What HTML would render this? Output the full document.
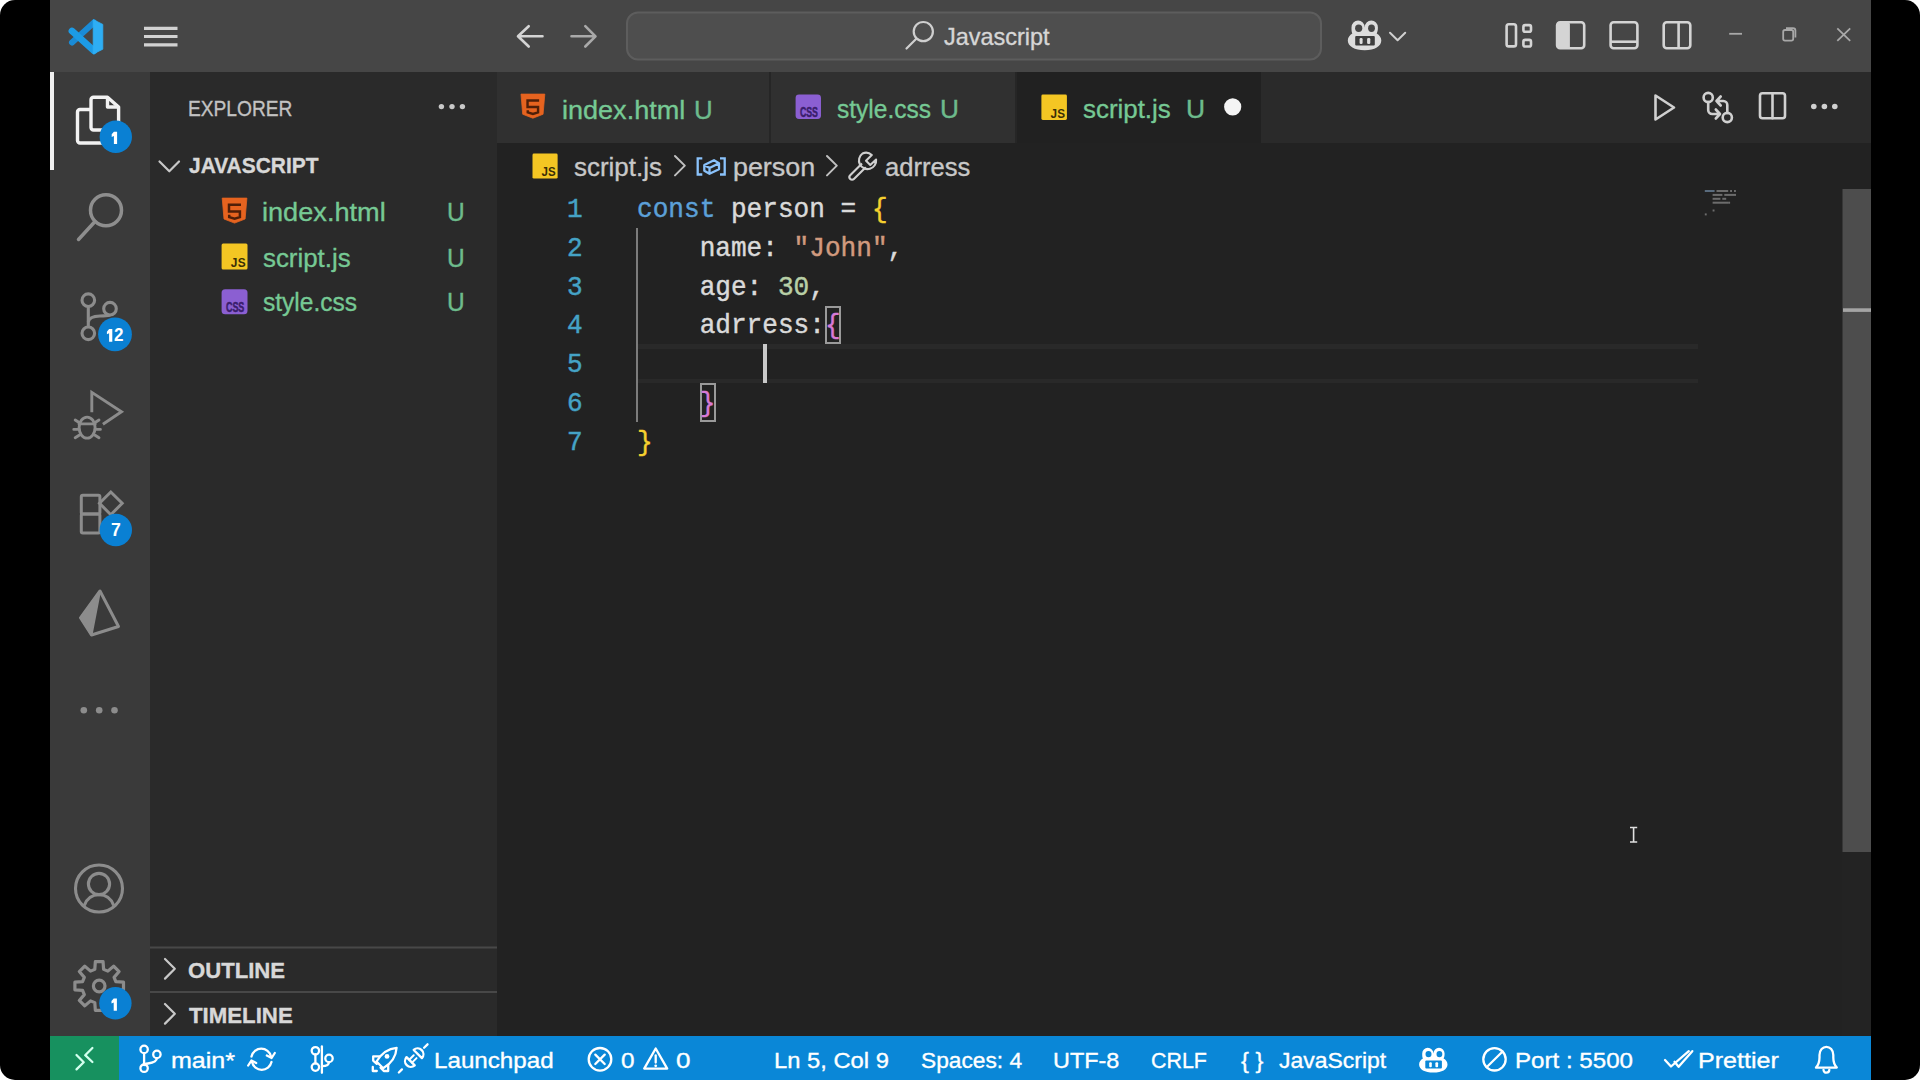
<!DOCTYPE html>
<html><head><meta charset="utf-8">
<style>
html,body{margin:0;padding:0;width:1920px;height:1080px;overflow:hidden;background:#fff;}
#frame{position:absolute;left:0;top:0;width:1920px;height:1080px;background:#000;border-radius:15px;overflow:hidden;}
.a{position:absolute;}
.t{position:absolute;white-space:nowrap;line-height:1;font-family:"Liberation Sans",sans-serif;transform-origin:0 0;-webkit-text-stroke:0.35px currentColor;}
.m{position:absolute;white-space:pre;line-height:1;font-family:"Liberation Mono",monospace;transform-origin:0 0;}
.m span,.m{-webkit-text-stroke:0.45px currentColor;}
svg{position:absolute;overflow:visible;}
</style></head><body>
<div id="frame">
  <!-- title bar -->
  <div class="a" style="left:50px;top:0;width:1821px;height:72px;background:#464646;"></div>
  <!-- activity bar -->
  <div class="a" style="left:50px;top:72px;width:100px;height:964px;background:#3a3a3a;"></div>
  <!-- sidebar -->
  <div class="a" style="left:150px;top:72px;width:347px;height:964px;background:#2a2a2a;"></div>
  <!-- editor -->
  <div class="a" style="left:497px;top:72px;width:1374px;height:964px;background:#222222;"></div>
  <!-- tab bar -->
  <div class="a" style="left:497px;top:72px;width:1374px;height:71px;background:#2a2a2a;"></div>
  <!-- status bar -->
  <div class="a" style="left:50px;top:1036px;width:1821px;height:44px;background:#0a87d7;"></div>
  <div class="a" style="left:50px;top:1036px;width:69px;height:44px;background:#17915f;"></div>

  <svg width="1920" height="1080" viewBox="0 0 1920 1080" style="left:0;top:0;">
    <!-- VS Code logo -->
    <g>
      <path d="M72,42.5 L94,22.5" stroke="#1a8bd6" stroke-width="6" stroke-linecap="round"/>
      <path d="M72,31 L94,50.8" stroke="#1c9be6" stroke-width="6.8" stroke-linecap="round"/>
      <path d="M93.2,19.6 L102.8,24.4 L102.8,49.2 L93.2,54 Z" fill="#2eaef4" stroke="#2eaef4" stroke-width="0.8" stroke-linejoin="round"/>
    </g>
    <!-- hamburger -->
    <g stroke="#d2d2d2" stroke-width="3.2" stroke-linecap="butt">
      <path d="M144,28.3 H177.5 M144,36.5 H177.5 M144,44.8 H177.5"/>
    </g>
    <!-- back / forward -->
    <g fill="none" stroke-width="2.6" stroke-linecap="round" stroke-linejoin="round">
      <path d="M528.7,26.2 L518,36.3 L528.7,46.5 M518.5,36.3 H542.5" stroke="#d4d4d4"/>
      <path d="M585.3,26.2 L595.5,36.3 L585.3,46.5 M595,36.3 H571.5" stroke="#a9a9a9"/>
    </g>
    <!-- search box -->
    <rect x="627" y="12.5" width="694" height="47" rx="11" fill="#4e4e4e" stroke="#5d5d5d" stroke-width="2"/>
    <g fill="none" stroke="#cfcfcf" stroke-width="2.2" stroke-linecap="round">
      <circle cx="923.3" cy="31.6" r="9.6"/>
      <path d="M916.3,38.7 L906.5,48.5"/>
    </g>
    <!-- copilot -->
    <g>
      <path d="M1351.5,27.5 a6.6,6.9 0 1 1 13.2,0 a6.6,6.9 0 1 1 13.2,0 c0,3 -0.5,4.5 -1.2,6 c2.6,1.4 4.6,4 4.6,7 c0,5.7 -6.5,9.8 -16.6,9.8 c-10.1,0 -16.9,-4.1 -16.9,-9.8 c0,-3 2,-5.6 4.5,-7 c-0.7,-1.5 -0.8,-3 -0.8,-6 Z" fill="#dcdcdc"/>
      <ellipse cx="1358.7" cy="28.2" rx="3.6" ry="3.7" fill="#464646"/>
      <ellipse cx="1371.5" cy="28.2" rx="3.4" ry="3.7" fill="#464646"/>
      <rect x="1355.2" y="36.1" width="19.6" height="9.4" rx="1" fill="#3d3d3d"/>
      <rect x="1359.6" y="38" width="3" height="6" rx="1.2" fill="#dcdcdc"/>
      <rect x="1367.1" y="38" width="3.2" height="6" rx="1.2" fill="#dcdcdc"/>
      <path d="M1390,32.8 L1397.6,40.2 L1405.2,32.8" fill="none" stroke="#d0d0d0" stroke-width="2" stroke-linecap="round" stroke-linejoin="round"/>
    </g>
    <!-- layout icons -->
    <g fill="none" stroke="#d4d4d4" stroke-width="2.6">
      <rect x="1506.6" y="24.2" width="9.4" height="22.2" rx="2.2"/>
      <rect x="1523.4" y="25.1" width="7.6" height="6.6" rx="1.8"/>
      <rect x="1523.4" y="39.9" width="7.6" height="6.6" rx="1.8"/>
      <rect x="1557.1" y="22.2" width="27.1" height="26.1" rx="3"/>
      <rect x="1610.6" y="22.2" width="26.8" height="26.1" rx="3"/>
      <path d="M1610.6,41.7 H1637.4"/>
      <rect x="1663.7" y="22.2" width="26.6" height="26.1" rx="3"/>
      <path d="M1678.6,22.2 V48.3"/>
    </g>
    <rect x="1557.1" y="22.2" width="12.8" height="26.1" rx="2" fill="#d4d4d4"/>
    <!-- window controls -->
    <g fill="none" stroke="#a8a8a8" stroke-width="1.8">
      <path d="M1729.2,33.8 H1742"/>
      <rect x="1783.2" y="30" width="10" height="10.6" rx="1.8"/>
      <path d="M1786,28.2 H1793 a2.4,2.4 0 0 1 2.4,2.4 V37.6"/>
      <path d="M1837.3,28.4 L1850.2,40.8 M1850.2,28.4 L1837.3,40.8"/>
    </g>
  </svg>
  <div class="t" style="left:943.5px;top:25.3px;font-size:24.0px;color:#d6d6d6;transform:scaleX(0.977);">Javascript</div>

  <svg width="1920" height="1080" viewBox="0 0 1920 1080" style="left:0;top:0;">
    <rect x="50" y="72" width="4" height="98" fill="#f0f0f0"/>
    <!-- explorer -->
    <g fill="none" stroke="#f2f2f2" stroke-width="3.4" stroke-linejoin="round">
      <path d="M90,109.5 H80 a2.5,2.5 0 0 0 -2.5,2.5 V140.5 a2.5,2.5 0 0 0 2.5,2.5 H103"/>
      <path d="M104,130 H93.5 a2.5,2.5 0 0 1 -2.5,-2.5 V99.8 a2.5,2.5 0 0 1 2.5,-2.5 H107.5 L118.6,107 V122"/>
      <path d="M107.5,97.3 V107 H118.6"/>
    </g>
    <!-- search -->
    <g fill="none" stroke="#8e8e8e" stroke-width="3.5" stroke-linecap="round">
      <circle cx="106" cy="210.3" r="15.5"/>
      <path d="M95,221.5 L78.5,239.5"/>
    </g>
    <!-- scm -->
    <g fill="none" stroke="#8c8c8c" stroke-width="3.1">
      <circle cx="88.3" cy="300.2" r="6.3"/>
      <circle cx="110" cy="308.7" r="6.3"/>
      <circle cx="88.3" cy="333.3" r="6.3"/>
      <path d="M88.3,306.5 V327"/>
      <path d="M88.3,322 C89,317 94,316.2 100,316 C106,315.8 108.5,316 110,315"/>
    </g>
    <!-- debug -->
    <g fill="none" stroke="#8c8c8c" stroke-width="2.9" stroke-linejoin="miter">
      <path d="M91.8,412.2 V392.4 L121.5,411.7 L102.9,424.2"/>
      <ellipse cx="87.1" cy="427.6" rx="8" ry="10.5"/>
      <path d="M79,423.9 H95.2 M75.2,420 L79.5,422.8 M73.8,429.4 H79 M75.2,437.8 L79.5,435 M99,420 L94.7,422.8 M100.4,429.4 H95.2 M99,437.8 L94.7,435" stroke-linecap="round"/>
    </g>
    <!-- extensions -->
    <g fill="none" stroke="#8c8c8c" stroke-width="3">
      <rect x="81.3" y="495.3" width="18.6" height="18.7" rx="1.5"/>
      <rect x="81.3" y="514" width="18.6" height="19" rx="1.5"/>
      <path d="M110.8,492 L122.2,503.3 L110.8,514.7 L99.5,503.3 Z"/>
    </g>
    <!-- prisma -->
    <g>
      <path d="M100,591 L118.5,626.5 L91.5,635 L80.5,617.8 Z" fill="none" stroke="#8c8c8c" stroke-width="3" stroke-linejoin="round"/>
      <path d="M100,591 L91.5,635 L80.5,617.8 Z" fill="#8c8c8c" stroke="#8c8c8c" stroke-width="2" stroke-linejoin="round"/>
    </g>
    <!-- more -->
    <g fill="#8c8c8c">
      <circle cx="83.8" cy="710.3" r="3.3"/>
      <circle cx="99.2" cy="710.3" r="3.3"/>
      <circle cx="114.5" cy="710.3" r="3.3"/>
    </g>
    <!-- accounts -->
    <g fill="none" stroke="#8c8c8c" stroke-width="3.1">
      <circle cx="99" cy="888.5" r="23.5"/>
      <circle cx="99" cy="884" r="10.6"/>
      <path d="M84.3,905.5 C87,898 92,894.8 99,894.8 C106,894.8 111,898 113.7,905.5"/>
    </g>
    <!-- gear -->
    <g fill="none" stroke="#8c8c8c" stroke-width="3.2" stroke-linejoin="round">
      <path d="M94.79,969.37 L95.35,961.70 L103.05,961.70 L103.61,969.37 L107.84,971.13 L113.66,966.10 L119.10,971.54 L114.07,977.36 L115.83,981.59 L123.50,982.15 L123.50,989.85 L115.83,990.41 L114.07,994.64 L119.10,1000.46 L113.66,1005.90 L107.84,1000.87 L103.61,1002.63 L103.05,1010.30 L95.35,1010.30 L94.79,1002.63 L90.56,1000.87 L84.74,1005.90 L79.30,1000.46 L84.33,994.64 L82.57,990.41 L74.90,989.85 L74.90,982.15 L82.57,981.59 L84.33,977.36 L79.30,971.54 L84.74,966.10 L90.56,971.13 Z"/>
      <circle cx="99.2" cy="986" r="5.8"/>
    </g>
    <!-- badges -->
    <g fill="#0a80d3">
      <circle cx="115.8" cy="136.7" r="16.2"/>
      <circle cx="115" cy="334.3" r="16.9"/>
      <circle cx="115.8" cy="530" r="16.2"/>
      <circle cx="115.4" cy="1003.2" r="16.2"/>
    </g>
  </svg>
  
  
  
  

  <svg width="1920" height="1080" viewBox="0 0 1920 1080" style="left:0;top:0;">
    <!-- tabs -->
    <rect x="497" y="72" width="272" height="71" fill="#303030"/>
    <rect x="771" y="72" width="245" height="71" fill="#303030"/>
    <rect x="1017" y="72" width="244" height="71" fill="#212121"/>
    <rect x="769" y="72" width="2" height="71" fill="#262626"/>
    <rect x="1015" y="72" width="2" height="71" fill="#262626"/>
    <g transform="translate(520.40,93.80) scale(0.965)">
      <path d="M0.6,0.3 H25.3 L23.5,21.2 L12.95,25.3 L2.4,21.2 Z" fill="#e6631f" stroke="#e6631f" stroke-width="0.8" stroke-linejoin="round"/>
      <path d="M19.4,6.9 H7.4 V13.7 H18.3 V19.3 L13,20.9 L7.6,19.3 V17" fill="none" stroke="#4f1f08" stroke-width="2.5"/>
    </g>
    <g transform="translate(795.60,94.60) scale(0.980)">
      <rect x="0" y="0" width="25.9" height="24.9" rx="3.5" fill="#8b5fd2"/>
      <text x="0" y="0" font-family="Liberation Sans" font-weight="bold" font-size="15" fill="#3a1d6c" stroke="#3a1d6c" stroke-width="0.5" transform="translate(4.5,22.6) scale(0.6,1)" letter-spacing="-0.2">CSS</text>
    </g>
    <g transform="translate(1041.40,94.50) scale(0.985)">
      <rect x="0" y="0" width="25.9" height="25.9" rx="1.5" fill="#f4c623"/>
      <text x="0" y="0" text-anchor="end" font-family="Liberation Sans" font-weight="bold" font-size="13.5" fill="#3a2f06" transform="translate(24.3,23.4) scale(0.88,1)" letter-spacing="0.3">JS</text>
    </g>
    <circle cx="1232.7" cy="106.8" r="8.6" fill="#f4f4f4"/>
    <!-- editor actions -->
    <g fill="none" stroke="#d0d0d0" stroke-width="2.6" stroke-linejoin="round" stroke-linecap="round">
      <path d="M1655.5,95.5 L1674,107.5 L1655.5,119.5 Z"/>
      <circle cx="1708.2" cy="97.5" r="4.6"/>
      <circle cx="1727.3" cy="117.5" r="4.6"/>
      <path d="M1708.2,102 V110 a4,4 0 0 0 4,4 H1719 M1715.8,109.5 L1720,114 L1715.8,118.5"/>
      <path d="M1727.3,113 V105 a4,4 0 0 0 -4,-4 H1716.5 M1720.7,96.5 L1716.5,101 L1720.7,105.5"/>
      <rect x="1760" y="93.3" width="25" height="25" rx="2.5"/>
      <path d="M1772.5,93.3 V118.3"/>
    </g>
    <g fill="#d0d0d0">
      <circle cx="1813.8" cy="106.5" r="2.8"/>
      <circle cx="1824.4" cy="106.5" r="2.8"/>
      <circle cx="1834.8" cy="106.5" r="2.8"/>
    </g>
    <!-- sidebar -->
    <g fill="none" stroke="#c8c8c8" stroke-width="2.2" stroke-linecap="round" stroke-linejoin="round">
      <path d="M159.5,161.5 L169.3,171.3 L179,161.5"/>
    </g>
    <g fill="#c8c8c8">
      <circle cx="441.4" cy="106.6" r="2.7"/>
      <circle cx="452" cy="106.6" r="2.7"/>
      <circle cx="462.4" cy="106.6" r="2.7"/>
    </g>
    <g transform="translate(221.60,197.80) scale(1.000)">
      <path d="M0.6,0.3 H25.3 L23.5,21.2 L12.95,25.3 L2.4,21.2 Z" fill="#e6631f" stroke="#e6631f" stroke-width="0.8" stroke-linejoin="round"/>
      <path d="M19.4,6.9 H7.4 V13.7 H18.3 V19.3 L13,20.9 L7.6,19.3 V17" fill="none" stroke="#4f1f08" stroke-width="2.5"/>
    </g>
    <g transform="translate(221.60,243.60) scale(1.000)">
      <rect x="0" y="0" width="25.9" height="25.9" rx="1.5" fill="#f4c623"/>
      <text x="0" y="0" text-anchor="end" font-family="Liberation Sans" font-weight="bold" font-size="13.5" fill="#3a2f06" transform="translate(24.3,23.4) scale(0.88,1)" letter-spacing="0.3">JS</text>
    </g>
    <g transform="translate(221.60,289.30) scale(1.000)">
      <rect x="0" y="0" width="25.9" height="24.9" rx="3.5" fill="#8b5fd2"/>
      <text x="0" y="0" font-family="Liberation Sans" font-weight="bold" font-size="15" fill="#3a1d6c" stroke="#3a1d6c" stroke-width="0.5" transform="translate(4.5,22.6) scale(0.6,1)" letter-spacing="-0.2">CSS</text>
    </g>
    <rect x="150" y="946.5" width="347" height="2" fill="#484848"/>
    <rect x="150" y="991" width="347" height="2" fill="#484848"/>
    <g fill="none" stroke="#c8c8c8" stroke-width="2.2" stroke-linecap="round" stroke-linejoin="round">
      <path d="M165,959 L174.8,968.8 L165,978.6"/>
      <path d="M165,1004 L174.8,1013.8 L165,1023.6"/>
    </g>
    <!-- breadcrumb -->
    <g transform="translate(532.50,153.50) scale(0.970)">
      <rect x="0" y="0" width="25.9" height="25.9" rx="1.5" fill="#f4c623"/>
      <text x="0" y="0" text-anchor="end" font-family="Liberation Sans" font-weight="bold" font-size="13.5" fill="#3a2f06" transform="translate(24.3,23.4) scale(0.88,1)" letter-spacing="0.3">JS</text>
    </g>
    <g fill="none" stroke="#c0c0c0" stroke-width="2" stroke-linecap="round" stroke-linejoin="round">
      <path d="M675,156 L684.8,165.6 L675,175.4"/>
      <path d="M827,156 L836.8,165.6 L827,175.4"/>
    </g>
    <g fill="none" stroke="#8ac2fb" stroke-width="2.3">
      <path d="M702.3,158.3 H697.7 V174.5 H702.3"/>
      <path d="M720,158.3 H724.7 V174.5 H720"/>
      <path d="M704.3,165 L714,160.2 L719,163.2 V169.2 L709.5,173.8 L704.3,170.8 Z M704.3,165 L709.5,168 L719,163.2 M709.5,168 V173.8" stroke-linejoin="round"/>
    </g>
    <g fill="none" stroke="#d0d0d0" stroke-width="2.1" stroke-linejoin="round">
      <path d="M862.5,153.5 a8.6,8.6 0 1 0 13.6,6 L870.3,165 L866,160.7 L871.8,155 a8.6,8.6 0 0 0 -9.3,-1.5 Z" />
      <path d="M862,163.5 L850.2,175.3 a2.6,2.6 0 0 0 3.7,3.7 L865.8,167.2"/>
    </g>
  </svg>
<div class="t" style="left:188.2px;top:98.3px;font-size:22.0px;color:#c2c2c2;transform:scaleX(0.871);">EXPLORER</div>
<div class="t" style="left:189.0px;top:155.4px;font-size:22.5px;font-weight:bold;color:#d8d8d8;transform:scaleX(0.930);">JAVASCRIPT</div>
<div class="t" style="left:262.2px;top:199.3px;font-size:26.3px;color:#76c994;transform:scaleX(1.032);">index.html</div>
<div class="t" style="left:263.3px;top:244.6px;font-size:26.3px;color:#76c994;transform:scaleX(0.983);">script.js</div>
<div class="t" style="left:263.3px;top:289.3px;font-size:26.3px;color:#76c994;transform:scaleX(0.933);">style.css</div>
<div class="t" style="left:446.5px;top:200.4px;font-size:25.0px;color:#6dbb8c;transform:scaleX(0.980);">U</div>
<div class="t" style="left:446.5px;top:245.7px;font-size:25.0px;color:#6dbb8c;transform:scaleX(0.980);">U</div>
<div class="t" style="left:446.5px;top:290.4px;font-size:25.0px;color:#6dbb8c;transform:scaleX(0.980);">U</div>
<div class="t" style="left:188.3px;top:959.7px;font-size:22.5px;font-weight:bold;color:#d8d8d8;transform:scaleX(0.983);">OUTLINE</div>
<div class="t" style="left:188.9px;top:1004.8px;font-size:22.5px;font-weight:bold;color:#d8d8d8;transform:scaleX(0.988);">TIMELINE</div>
<div class="t" style="left:561.6px;top:96.5px;font-size:26.3px;color:#76c994;transform:scaleX(1.028);">index.html</div>
<div class="t" style="left:694.0px;top:97.6px;font-size:25.0px;color:#6dbb8c;transform:scaleX(1.036);">U</div>
<div class="t" style="left:837.0px;top:96.2px;font-size:26.3px;color:#76c994;transform:scaleX(0.932);">style.css</div>
<div class="t" style="left:939.9px;top:97.3px;font-size:25.0px;color:#6dbb8c;transform:scaleX(1.050);">U</div>
<div class="t" style="left:1082.9px;top:96.3px;font-size:26.3px;color:#76c994;transform:scaleX(0.984);">script.js</div>
<div class="t" style="left:1186.0px;top:97.4px;font-size:25.0px;color:#6dbb8c;transform:scaleX(1.057);">U</div>
<div class="t" style="left:574.3px;top:154.0px;font-size:26.3px;color:#c8c8c8;transform:scaleX(0.986);">script.js</div>
<div class="t" style="left:733.0px;top:154.1px;font-size:26.3px;color:#c8c8c8;transform:scaleX(1.021);">person</div>
<div class="t" style="left:885.3px;top:154.2px;font-size:26.3px;color:#c8c8c8;transform:scaleX(0.972);">adrress</div>
<div class="t" style="left:170.8px;top:1049.5px;font-size:22.5px;color:#ffffff;transform:scaleX(1.113);">main*</div>
<div class="t" style="left:434.1px;top:1049.5px;font-size:22.5px;color:#ffffff;transform:scaleX(1.074);">Launchpad</div>
<div class="t" style="left:621.0px;top:1049.5px;font-size:22.5px;color:#ffffff;transform:scaleX(1.080);">0</div>
<div class="t" style="left:676.0px;top:1049.5px;font-size:22.5px;color:#ffffff;transform:scaleX(1.154);">0</div>
<div class="t" style="left:774.3px;top:1049.5px;font-size:22.5px;color:#ffffff;transform:scaleX(1.056);">Ln 5, Col 9</div>
<div class="t" style="left:920.7px;top:1049.5px;font-size:22.5px;color:#ffffff;transform:scaleX(1.010);">Spaces: 4</div>
<div class="t" style="left:1052.9px;top:1049.5px;font-size:22.5px;color:#ffffff;transform:scaleX(1.040);">UTF-8</div>
<div class="t" style="left:1150.6px;top:1049.5px;font-size:22.5px;color:#ffffff;transform:scaleX(0.951);">CRLF</div>
<div class="t" style="left:1279.0px;top:1049.5px;font-size:22.5px;color:#ffffff;transform:scaleX(1.021);">JavaScript</div>
<div class="t" style="left:1514.7px;top:1049.5px;font-size:22.5px;color:#ffffff;transform:scaleX(1.072);">Port : 5500</div>
<div class="t" style="left:1697.9px;top:1049.5px;font-size:22.5px;color:#ffffff;transform:scaleX(1.114);">Prettier</div>
<svg width="1920" height="1080" viewBox="0 0 1920 1080" style="left:0;top:0;"><path d="M113.90,131.70 H117.10 V144.00 H113.90 V135.90 L111.70,136.90 V134.30 Z" fill="#ffffff"/><path d="M113.70,998.40 H116.90 V1010.70 H113.70 V1002.60 L111.50,1003.60 V1001.00 Z" fill="#ffffff"/><path d="M109.10,329.10 H112.30 V341.70 H109.10 V333.30 L106.90,334.30 V331.70 Z" fill="#ffffff"/></svg>
<div class="t" style="left:114.0px;top:326.9px;font-size:17.5px;font-weight:bold;color:#ffffff;transform:scaleX(0.976);-webkit-text-stroke:0;">2</div>
<div class="t" style="left:110.9px;top:522.1px;font-size:17.5px;font-weight:bold;color:#ffffff;transform:scaleX(1.009);-webkit-text-stroke:0;">7</div>
<!--CODE-->
<div class="a" style="left:638px;top:344px;width:1060px;height:4.5px;background:#292929;"></div>
<div class="a" style="left:638px;top:378.5px;width:1060px;height:4.5px;background:#292929;"></div>
<div class="a" style="left:636px;top:227.5px;width:2.4px;height:194.2px;background:#7c7c7c;"></div>
<div class="a" style="left:825.3px;top:305.6px;width:15.3px;height:38.2px;box-sizing:border-box;border:2px solid #9a9a9a;"></div>
<div class="a" style="left:700px;top:383.2px;width:15.6px;height:38.4px;box-sizing:border-box;border:2px solid #9a9a9a;"></div>
<div class="a" style="left:763.2px;top:344.4px;width:3.4px;height:38.2px;background:#c9c9c9;"></div>
<div class="m" style="left:566.8px;top:195.9px;font-size:28px;color:#45a3c6;transform:scaleX(0.932);">1</div>
<div class="m" style="left:566.8px;top:234.7px;font-size:28px;color:#45a3c6;transform:scaleX(0.932);">2</div>
<div class="m" style="left:566.8px;top:273.5px;font-size:28px;color:#45a3c6;transform:scaleX(0.932);">3</div>
<div class="m" style="left:566.8px;top:312.3px;font-size:28px;color:#45a3c6;transform:scaleX(0.932);">4</div>
<div class="m" style="left:566.8px;top:351.1px;font-size:28px;color:#45a3c6;transform:scaleX(0.932);">5</div>
<div class="m" style="left:566.8px;top:389.9px;font-size:28px;color:#45a3c6;transform:scaleX(0.932);">6</div>
<div class="m" style="left:566.8px;top:428.7px;font-size:28px;color:#45a3c6;transform:scaleX(0.932);">7</div>
<div class="m" style="left:637.4px;top:195.9px;font-size:28px;transform:scaleX(0.9320);"><span style="color:#5ca0d8">const</span><span style="color:#dadada"> person = </span><span style="color:#f5d02f">{</span></div>
<div class="m" style="left:637.4px;top:234.7px;font-size:28px;transform:scaleX(0.9320);"><span style="color:#dadada">    name: </span><span style="color:#d19a7e">"John"</span><span style="color:#dadada">,</span></div>
<div class="m" style="left:637.4px;top:273.5px;font-size:28px;transform:scaleX(0.9320);"><span style="color:#dadada">    age: </span><span style="color:#b8cfa6">30</span><span style="color:#dadada">,</span></div>
<div class="m" style="left:637.4px;top:312.3px;font-size:28px;transform:scaleX(0.9320);"><span style="color:#dadada">    adrress:</span><span style="color:#d97ad6">{</span></div>
<div class="m" style="left:637.4px;top:389.9px;font-size:28px;transform:scaleX(0.9320);"><span style="color:#dadada">    </span><span style="color:#d97ad6">}</span></div>
<div class="m" style="left:637.4px;top:428.7px;font-size:28px;transform:scaleX(0.9320);"><span style="color:#f5d02f">}</span></div>
<svg width="1920" height="1080" viewBox="0 0 1920 1080" style="left:0;top:0;">
  <rect x="1704.8" y="190.0" width="9.8" height="2" fill="#8fb4d8" opacity="0.5"/>
  <rect x="1716.5" y="190.0" width="11.7" height="2" fill="#c8c8c8" opacity="0.45"/>
  <rect x="1730.1" y="190.0" width="1.9" height="2" fill="#c8c8c8" opacity="0.45"/>
  <rect x="1734.0" y="190.0" width="1.9" height="2" fill="#c8c8c8" opacity="0.45"/>
  <rect x="1712.6" y="193.9" width="9.8" height="2" fill="#c8c8c8" opacity="0.45"/>
  <rect x="1724.3" y="193.9" width="11.7" height="2" fill="#c8c8c8" opacity="0.45"/>
  <rect x="1712.6" y="197.8" width="7.8" height="2" fill="#c8c8c8" opacity="0.45"/>
  <rect x="1722.3" y="197.8" width="3.9" height="2" fill="#c8c8c8" opacity="0.45"/>
  <rect x="1712.6" y="201.7" width="15.6" height="2" fill="#c8c8c8" opacity="0.45"/>
  <rect x="1728.2" y="201.7" width="1.9" height="2" fill="#c8c8c8" opacity="0.45"/>
  <rect x="1712.6" y="209.5" width="1.9" height="2" fill="#c8c8c8" opacity="0.45"/>
  <rect x="1704.8" y="213.4" width="1.9" height="2" fill="#c8c8c8" opacity="0.45"/>
  <rect x="1842" y="189" width="29" height="847" fill="#232323"/>
  
  <rect x="1842.5" y="189" width="28.5" height="663" fill="#4d4d4d"/>
  <rect x="1843" y="308.3" width="28" height="3.6" fill="#a5a5a5"/>
  <!-- I-beam -->
  <g stroke="#e0e0e0" stroke-width="1.6" fill="none">
    <path d="M1630,827.5 H1637.2 M1633.6,827.5 V842 M1630,842 H1637.2"/>
  </g>
</svg>
<!--/CODE-->
<!--STATUS-->
<svg width="1920" height="1080" viewBox="0 0 1920 1080" style="left:0;top:0;">
  <g fill="none" stroke="#d2ffee" stroke-width="2.3" stroke-linecap="round" stroke-linejoin="round">
    <path d="M76.5,1055 L83.7,1062.2 L76.5,1069.4"/>
    <path d="M92.4,1048 L85.2,1055.2 L92.4,1062"/>
  </g>
  <g fill="none" stroke="#ffffff" stroke-width="2.3" stroke-linecap="round" stroke-linejoin="round">
    <!-- branch -->
    <circle cx="144.1" cy="1049.4" r="3.7"/>
    <circle cx="144.1" cy="1068.2" r="3.7"/>
    <circle cx="156.9" cy="1054.4" r="3.7"/>
    <path d="M144.1,1053.1 V1064.5"/>
    <path d="M156.9,1058.1 C156.9,1062 152,1063 148,1063.5 C145.5,1063.8 144.3,1064.2 144.1,1065"/>
    <!-- sync -->
    <path d="M251.5,1056.5 A10,10 0 0 1 271,1056.5"/>
    <path d="M271.5,1062 A10,10 0 0 1 252,1062"/>
    <path d="M266.8,1055.5 L271.6,1058 L274.8,1053"/>
    <path d="M256.2,1063 L251.4,1060.5 L248.2,1065.5"/>
    <!-- git graph -->
    <circle cx="315.4" cy="1050.8" r="3.7"/>
    <circle cx="315.4" cy="1067.1" r="3.7"/>
    <circle cx="329" cy="1058.4" r="3.7"/>
    <path d="M315.4,1054.5 V1063.4"/>
    <path d="M321.9,1046.5 V1072.8"/>
    <path d="M329,1062.1 C329,1065.5 325,1066.2 322,1066.2"/>
    <!-- rocket -->
    <path d="M396.6,1047.8 C388,1048.5 381,1054 376.5,1061.5 L383.2,1068.2 C391,1063.8 396,1057 396.6,1047.8 Z"/>
    <path d="M379.6,1056.3 H373.2 V1060.6 L376.8,1063.9"/>
    <path d="M388.2,1065 V1071 H383.8 L380.6,1067.6"/>
    <path d="M372.8,1067 V1071 H376.8"/>
    <!-- plug -->
    <g transform="translate(413.2,1058.4) scale(1.28) translate(-413.2,-1058.4)">
    <path vector-effect="non-scaling-stroke" d="M413.6,1051.8 L420,1058.2 A4.53,4.53 0 0 0 413.6,1051.8 Z"/>
    <path vector-effect="non-scaling-stroke" d="M421.7,1050.1 L424.4,1047.4"/>
    <path vector-effect="non-scaling-stroke" d="M408,1057.4 L414.4,1063.8 A4.53,4.53 0 0 1 408,1057.4 Z"/>
    <path vector-effect="non-scaling-stroke" d="M404.4,1067 L402,1069.4"/>
    <path vector-effect="non-scaling-stroke" d="M410.1,1059.5 L413.6,1056 M412.3,1061.7 L415.8,1058.2" stroke-width="2"/>
    </g>
    <!-- error -->
    <circle cx="600" cy="1059.3" r="11.3"/>
    <path d="M595.3,1054.6 L604.7,1064 M604.7,1054.6 L595.3,1064"/>
    <!-- warning -->
    <path d="M655.7,1048.5 L667.2,1068.6 H644.2 Z"/>
    <path d="M655.7,1055.5 V1062.5"/>
    <!-- braces -->
    <!-- port -->
    <circle cx="1494.5" cy="1059.3" r="11.2"/>
    <path d="M1502.6,1051.5 L1486.6,1067.3"/>
    <!-- check all -->
    <path d="M1665,1060 L1671,1066.5 L1688.8,1051.2"/>
    <path d="M1674.5,1061.8 L1678.6,1066.8 L1692.3,1051.2"/>
    <!-- bell -->
    <path d="M1816,1067.6 H1836.8 C1834,1064.5 1833.3,1061.5 1833.3,1057.5 V1055 C1833.3,1050 1830,1046.8 1826.4,1046.8 C1822.8,1046.8 1819.5,1050 1819.5,1055 V1057.5 C1819.5,1061.5 1818.8,1064.5 1816,1067.6 Z"/>
    <path d="M1823.5,1069.8 a2.9,2.9 0 0 0 5.8,0"/>
  </g>
  <circle cx="655.7" cy="1065.8" r="1.4" fill="#fff"/>
  <circle cx="387" cy="1056.4" r="2.4" fill="#fff"/>
  <!-- copilot status -->
  <g>
    <path d="M1422.2,1053.5 a5.6,5.8 0 1 1 11.2,0 a5.6,5.8 0 1 1 11.2,0 c0,2.5 -0.4,3.8 -1,5 c2.2,1.2 3.9,3.4 3.9,5.9 c0,4.8 -5.5,8.2 -14.1,8.2 c-8.6,0 -14.3,-3.4 -14.3,-8.2 c0,-2.5 1.7,-4.7 3.8,-5.9 c-0.6,-1.3 -0.7,-2.5 -0.7,-5 Z" fill="#ffffff"/>
    <ellipse cx="1428.5" cy="1054.1" rx="3" ry="3.2" fill="#0a87d7"/>
    <ellipse cx="1439.4" cy="1054.1" rx="2.9" ry="3.2" fill="#0a87d7"/>
    <rect x="1425.3" y="1060.5" width="16.6" height="8" rx="1" fill="#0a87d7"/>
    <rect x="1429.2" y="1062.2" width="2.6" height="5.1" rx="1" fill="#ffffff"/>
    <rect x="1435.4" y="1062.2" width="2.7" height="5.1" rx="1" fill="#ffffff"/>
  </g>
</svg>
<div class="t" style="left:1241.3px;top:1049.5px;font-size:22.5px;color:#ffffff;transform:scaleX(1.055);">{ }</div>
<!--/STATUS-->
</div>
</body></html>
